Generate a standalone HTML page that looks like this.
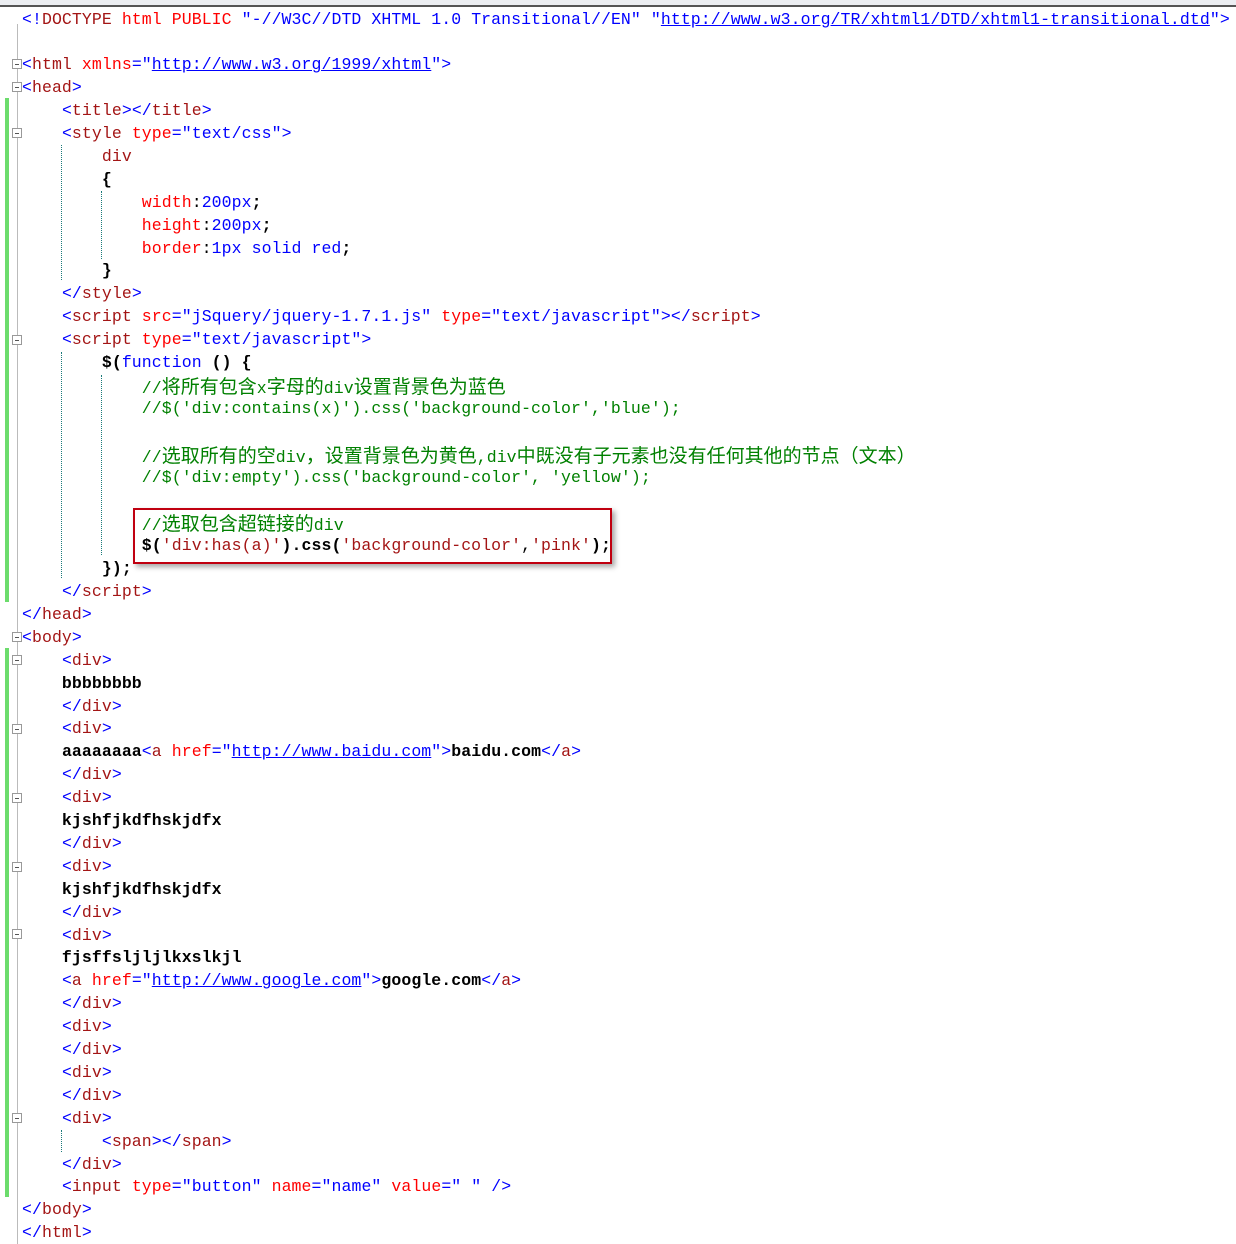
<!DOCTYPE html>
<html><head><meta charset="utf-8"><style>
html,body{margin:0;padding:0;background:#fff;width:1236px;height:1244px;overflow:hidden;position:relative}
.topbar{position:absolute;left:0;top:0;width:1236px;height:5px;background:#eceef2;border-bottom:2px solid #555}
.l{position:absolute;left:22px;height:23px;line-height:23px;font-family:"Liberation Mono","Noto Sans CJK SC",monospace;font-size:16.5px;letter-spacing:0.08px;white-space:pre;color:#000;margin-top:1px}
.b{color:#0000ff}.t{color:#a31515}.a{color:#ff0000}.v{color:#0000ff}.u{color:#0000ff;text-decoration:underline}
.c{color:#008000}.s{color:#a31515}.k{color:#0000ff}.x{font-weight:bold}
.z{font-family:"Noto Sans CJK SC",sans-serif;font-size:19px;letter-spacing:0}
.g{position:absolute;left:5px;width:4px;background:#6cdc6c}
.f{position:absolute;left:12px;width:8px;height:8px;border:1px solid #999;background:#fff}
.f:after{content:"";position:absolute;left:2px;top:3.5px;width:4px;height:1px;background:#555}
.vl{position:absolute;left:17px;width:1px;background:#bbb}
.d{position:absolute;width:0;border-left:1px dotted #1a7a7a}
.box{position:absolute;left:133px;top:508px;width:475px;height:52px;border:2px solid #c00010;box-shadow:3px 3px 5px rgba(0,0,0,0.35)}
</style></head><body>
<div class="topbar"></div>
<div class="vl" style="top:24px;height:1220px"></div>
<div class="g" style="top:98px;height:504px"></div>
<div class="g" style="top:648px;height:549px"></div>
<div class="f" style="top:59px"></div>
<div class="f" style="top:82px"></div>
<div class="f" style="top:128px"></div>
<div class="f" style="top:335px"></div>
<div class="f" style="top:632px"></div>
<div class="f" style="top:655px"></div>
<div class="f" style="top:724px"></div>
<div class="f" style="top:793px"></div>
<div class="f" style="top:862px"></div>
<div class="f" style="top:929px"></div>
<div class="f" style="top:1113px"></div>
<div class="d" style="left:61px;top:145px;height:135px"></div>
<div class="d" style="left:101px;top:191px;height:68px"></div>
<div class="d" style="left:61px;top:352px;height:226px"></div>
<div class="d" style="left:101px;top:375px;height:180px"></div>
<div class="d" style="left:61px;top:1130px;height:22px"></div>
<div class="box"></div>

<div class="l" style="top:6.5px"><span class="b">&lt;!</span><span class="t">DOCTYPE</span> <span class="a">html</span> <span class="a">PUBLIC</span> <span class="v">"-//W3C//DTD XHTML 1.0 Transitional//EN"</span> <span class="v">"</span><span class="u">http://www.w3.org/TR/xhtml1/DTD/xhtml1-transitional.dtd</span><span class="v">"</span><span class="b">&gt;</span></div>
<div class="l" style="top:52.3px"><span class="b">&lt;</span><span class="t">html</span> <span class="a">xmlns</span><span class="b">="</span><span class="u">http://www.w3.org/1999/xhtml</span><span class="b">"&gt;</span></div>
<div class="l" style="top:75.2px"><span class="b">&lt;</span><span class="t">head</span><span class="b">&gt;</span></div>
<div class="l" style="top:98.1px">    <span class="b">&lt;</span><span class="t">title</span><span class="b">&gt;&lt;/</span><span class="t">title</span><span class="b">&gt;</span></div>
<div class="l" style="top:121px">    <span class="b">&lt;</span><span class="t">style</span> <span class="a">type</span><span class="b">="text/css"&gt;</span></div>
<div class="l" style="top:143.9px">        <span class="t">div</span></div>
<div class="l" style="top:166.8px">        <span class="x">{</span></div>
<div class="l" style="top:189.7px">            <span class="a">width</span>:<span class="v">200px</span><span class="x">;</span></div>
<div class="l" style="top:212.6px">            <span class="a">height</span>:<span class="v">200px</span><span class="x">;</span></div>
<div class="l" style="top:235.5px">            <span class="a">border</span>:<span class="v">1px solid red</span><span class="x">;</span></div>
<div class="l" style="top:258.4px">        <span class="x">}</span></div>
<div class="l" style="top:281.3px">    <span class="b">&lt;/</span><span class="t">style</span><span class="b">&gt;</span></div>
<div class="l" style="top:304.2px">    <span class="b">&lt;</span><span class="t">script</span> <span class="a">src</span><span class="b">="jSquery/jquery-1.7.1.js"</span> <span class="a">type</span><span class="b">="text/javascript"&gt;&lt;/</span><span class="t">script</span><span class="b">&gt;</span></div>
<div class="l" style="top:327.1px">    <span class="b">&lt;</span><span class="t">script</span> <span class="a">type</span><span class="b">="text/javascript"&gt;</span></div>
<div class="l" style="top:350px">        <span class="x">$(</span><span class="k">function</span> <span class="x">() {</span></div>
<div class="l c" style="top:372.9px">            //<span class="z">将所有包含</span>x<span class="z">字母的</span>div<span class="z">设置背景色为蓝色</span></div>
<div class="l c" style="top:395.8px">            //$('div:contains(x)').css('background-color','blue');</div>
<div class="l c" style="top:441.6px">            //<span class="z">选取所有的空</span>div<span class="z">，设置背景色为黄色</span>,div<span class="z">中既没有子元素也没有任何其他的节点（文本）</span></div>
<div class="l c" style="top:464.5px">            //$('div:empty').css('background-color', 'yellow');</div>
<div class="l c" style="top:510.3px">            //<span class="z">选取包含超链接的</span>div</div>
<div class="l" style="top:533.2px">            <span class="x">$(</span><span class="s">'div:has(a)'</span><span class="x">).css(</span><span class="s">'background-color'</span>,<span class="s">'pink'</span><span class="x">);</span></div>
<div class="l" style="top:556.1px">        <span class="x">});</span></div>
<div class="l" style="top:579px">    <span class="b">&lt;/</span><span class="t">script</span><span class="b">&gt;</span></div>
<div class="l" style="top:601.9px"><span class="b">&lt;/</span><span class="t">head</span><span class="b">&gt;</span></div>
<div class="l" style="top:624.8px"><span class="b">&lt;</span><span class="t">body</span><span class="b">&gt;</span></div>
<div class="l" style="top:647.7px">    <span class="b">&lt;</span><span class="t">div</span><span class="b">&gt;</span></div>
<div class="l x" style="top:670.6px">    bbbbbbbb</div>
<div class="l" style="top:693.5px">    <span class="b">&lt;/</span><span class="t">div</span><span class="b">&gt;</span></div>
<div class="l" style="top:716.4px">    <span class="b">&lt;</span><span class="t">div</span><span class="b">&gt;</span></div>
<div class="l" style="top:739.3px">    <span class="x">aaaaaaaa</span><span class="b">&lt;</span><span class="t">a</span> <span class="a">href</span><span class="b">="</span><span class="u">http://www.baidu.com</span><span class="b">"&gt;</span><span class="x">baidu.com</span><span class="b">&lt;/</span><span class="t">a</span><span class="b">&gt;</span></div>
<div class="l" style="top:762.2px">    <span class="b">&lt;/</span><span class="t">div</span><span class="b">&gt;</span></div>
<div class="l" style="top:785.1px">    <span class="b">&lt;</span><span class="t">div</span><span class="b">&gt;</span></div>
<div class="l x" style="top:808px">    kjshfjkdfhskjdfx</div>
<div class="l" style="top:830.9px">    <span class="b">&lt;/</span><span class="t">div</span><span class="b">&gt;</span></div>
<div class="l" style="top:853.8px">    <span class="b">&lt;</span><span class="t">div</span><span class="b">&gt;</span></div>
<div class="l x" style="top:876.7px">    kjshfjkdfhskjdfx</div>
<div class="l" style="top:899.6px">    <span class="b">&lt;/</span><span class="t">div</span><span class="b">&gt;</span></div>
<div class="l" style="top:922.5px">    <span class="b">&lt;</span><span class="t">div</span><span class="b">&gt;</span></div>
<div class="l x" style="top:945.4px">    fjsffsljljlkxslkjl</div>
<div class="l" style="top:968.3px">    <span class="b">&lt;</span><span class="t">a</span> <span class="a">href</span><span class="b">="</span><span class="u">http://www.google.com</span><span class="b">"&gt;</span><span class="x">google.com</span><span class="b">&lt;/</span><span class="t">a</span><span class="b">&gt;</span></div>
<div class="l" style="top:991.2px">    <span class="b">&lt;/</span><span class="t">div</span><span class="b">&gt;</span></div>
<div class="l" style="top:1014.1px">    <span class="b">&lt;</span><span class="t">div</span><span class="b">&gt;</span></div>
<div class="l" style="top:1037px">    <span class="b">&lt;/</span><span class="t">div</span><span class="b">&gt;</span></div>
<div class="l" style="top:1059.9px">    <span class="b">&lt;</span><span class="t">div</span><span class="b">&gt;</span></div>
<div class="l" style="top:1082.8px">    <span class="b">&lt;/</span><span class="t">div</span><span class="b">&gt;</span></div>
<div class="l" style="top:1105.7px">    <span class="b">&lt;</span><span class="t">div</span><span class="b">&gt;</span></div>
<div class="l" style="top:1128.6px">        <span class="b">&lt;</span><span class="t">span</span><span class="b">&gt;&lt;/</span><span class="t">span</span><span class="b">&gt;</span></div>
<div class="l" style="top:1151.5px">    <span class="b">&lt;/</span><span class="t">div</span><span class="b">&gt;</span></div>
<div class="l" style="top:1174.4px">    <span class="b">&lt;</span><span class="t">input</span> <span class="a">type</span><span class="b">="button"</span> <span class="a">name</span><span class="b">="name"</span> <span class="a">value</span><span class="b">=" "</span> <span class="b">/&gt;</span></div>
<div class="l" style="top:1197.3px"><span class="b">&lt;/</span><span class="t">body</span><span class="b">&gt;</span></div>
<div class="l" style="top:1220.2px"><span class="b">&lt;/</span><span class="t">html</span><span class="b">&gt;</span></div>
</body></html>
